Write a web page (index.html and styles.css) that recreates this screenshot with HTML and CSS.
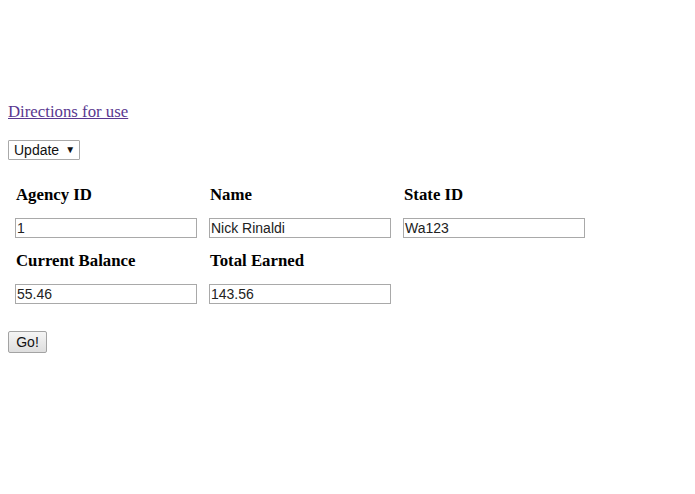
FILE: index.html
```html
<!DOCTYPE html>
<html>
<head>
<meta charset="utf-8">
<link rel="stylesheet" href="styles.css">
</head>
<body>
<div class="page">
  <p class="directions"><a href="#">Directions for use</a></p>
  <div class="mode">
    <div class="select"><span>Update</span><span class="arrow">▼</span></div>
  </div>
  <div class="fields">
    <div class="field">
      <div class="label">Agency ID</div>
      <div class="input">1</div>
    </div>
    <div class="field">
      <div class="label">Name</div>
      <div class="input">Nick Rinaldi</div>
    </div>
    <div class="field">
      <div class="label">State ID</div>
      <div class="input">Wa123</div>
    </div>
    <div class="field">
      <div class="label">Current Balance</div>
      <div class="input">55.46</div>
    </div>
    <div class="field">
      <div class="label">Total Earned</div>
      <div class="input">143.56</div>
    </div>
  </div>
  <div class="actions"><button class="go">Go!</button></div>
</div>
</body>
</html>
```
FILE: styles.css
```css
html, body {
  margin: 0;
  background: #fff;
}
.page {
  padding: 103px 8px 0 8px;
  font-family: "Liberation Serif", "Times New Roman", serif;
  font-size: 16.8px;
  color: #000;
}
.directions {
  margin: 0;
  line-height: 18px;
}
.directions a {
  color: #5a3790;
  text-decoration: underline;
}
.mode {
  margin-top: 19px;
  display: flex;
}
.select {
  box-sizing: border-box;
  height: 20px;
  width: 72px;
  border: 1px solid #a9a9a9;
  border-radius: 1px;
  background: #fff;
  display: flex;
  align-items: center;
  padding: 0 4px 0 5px;
  font-family: "Liberation Sans", Arial, sans-serif;
  font-size: 14px;
  color: #111;
  gap: 6px;
}
.select .arrow {
  font-size: 10px;
  line-height: 1;
}
.fields {
  margin-top: 26px;
  padding-left: 7px;
  display: grid;
  grid-template-columns: repeat(3, 182px);
  column-gap: 12px;
  row-gap: 14px;
}
.label {
  font-weight: bold;
  line-height: 18px;
  height: 18px;
  margin-bottom: 14px;
  padding-left: 1px;
}
.input {
  box-sizing: border-box;
  height: 20px;
  border: 1px solid #a9a9a9;
  padding: 0 1px;
  font-family: "Liberation Sans", Arial, sans-serif;
  font-size: 14px;
  line-height: 18px;
  color: #222;
  white-space: nowrap;
}
.actions {
  margin-top: 27px;
}
.go {
  box-sizing: border-box;
  height: 22px;
  width: 39px;
  padding: 0;
  border: 1px solid #a3a3a3;
  border-radius: 2px;
  background: linear-gradient(#f5f5f5, #dedede);
  font-family: "Liberation Sans", Arial, sans-serif;
  font-size: 14px;
  color: #111;
}
```
